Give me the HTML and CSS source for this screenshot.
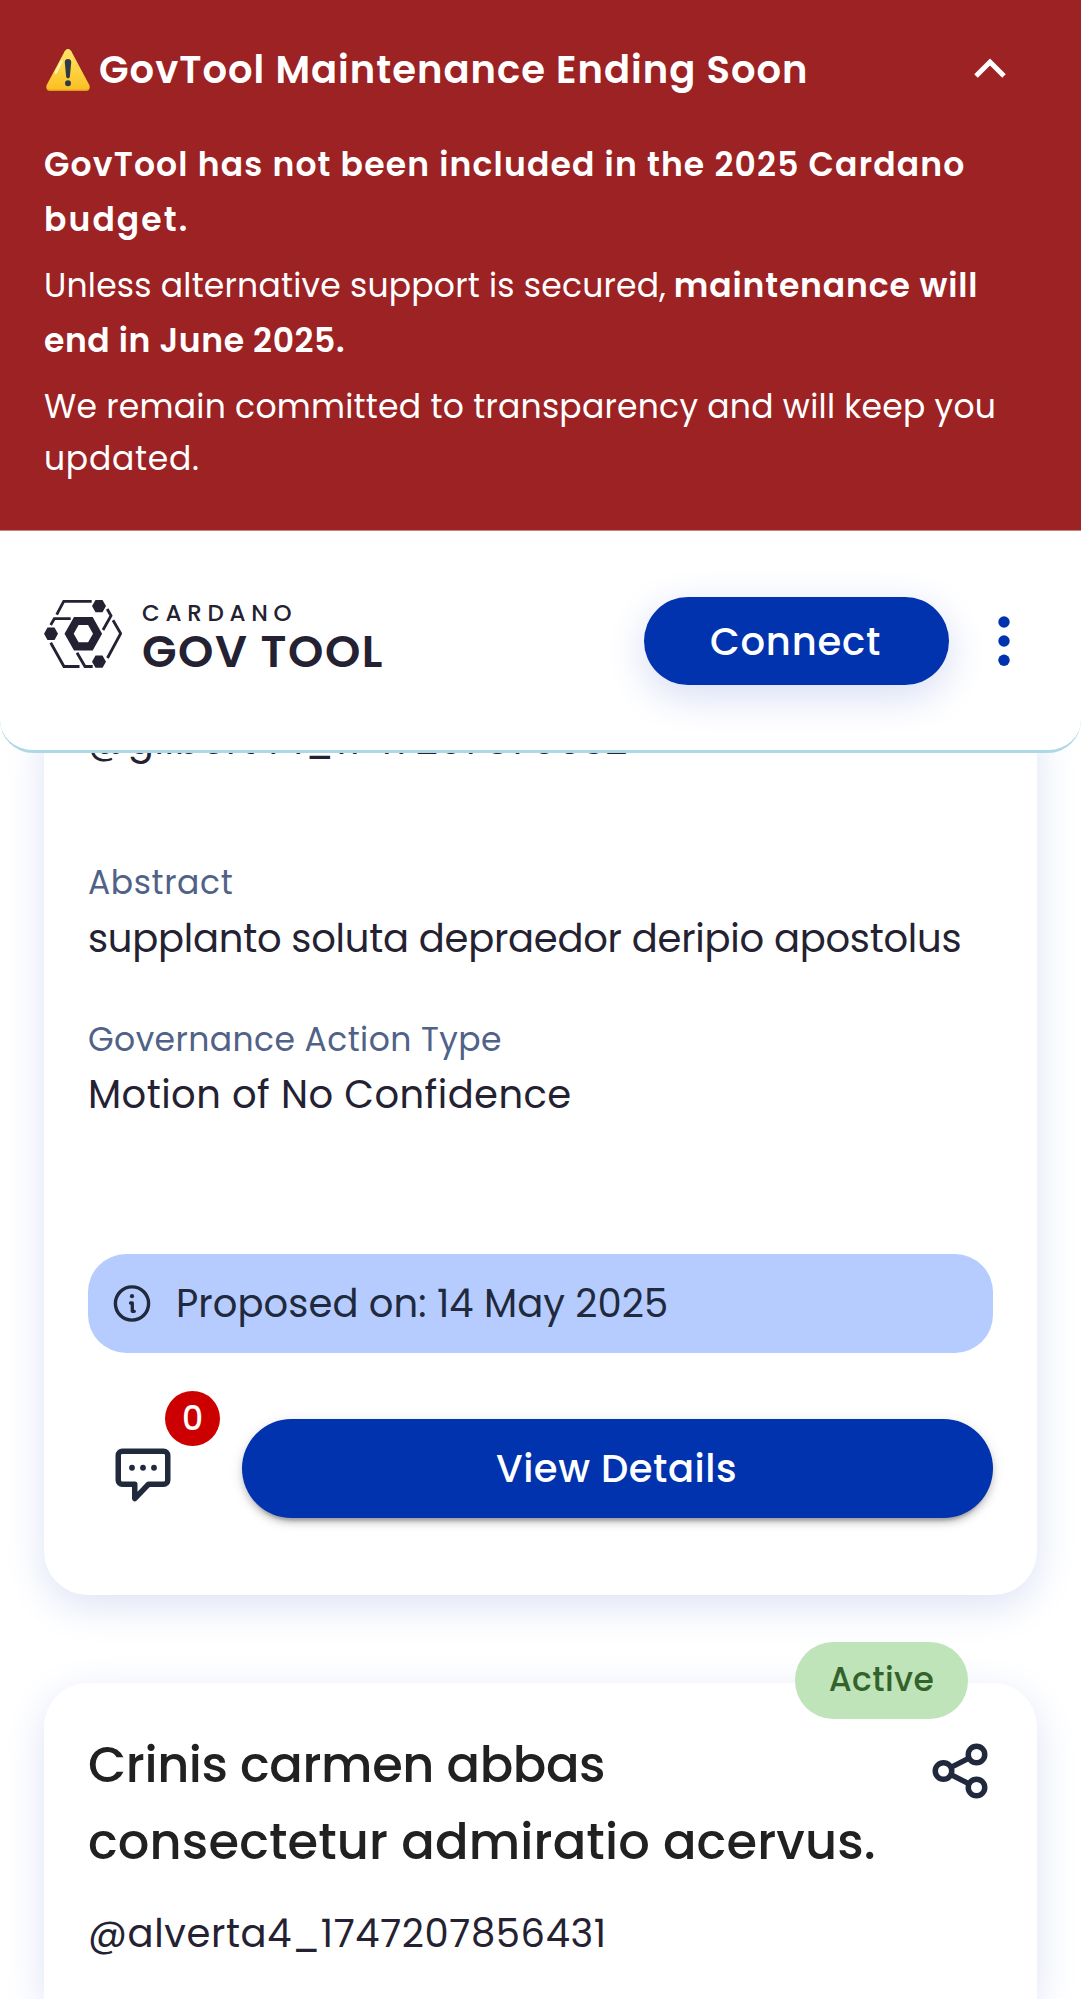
FILE: index.html
```html
<!DOCTYPE html>
<html lang="en">
<head>
<meta charset="utf-8">
<title>Cardano GovTool</title>
<link rel="stylesheet" href="styles.css">
</head>
<body>
<section class="banner">
  <div class="banner-head">
    <svg class="warning" viewBox="0 0 44 42" aria-hidden="true">
      <defs><linearGradient id="amber" x1="0" y1="0" x2="0" y2="1"><stop offset="0" stop-color="#ffe36c"/><stop offset=".6" stop-color="#fdd03c"/><stop offset="1" stop-color="#fbbf24"/></linearGradient></defs>
      <path d="M18.800 2.200Q22-2 25.200 2.200L43.300 37.200Q44.500 41.500 40.500 42H3.500Q-.5 41.500.7 37.200Z" fill="#e19c22"/>
      <path d="M18.800 2.200Q22-2 25.200 2.200L43.300 36Q44.500 40 40.500 40.500H3.500Q-.5 40 .7 36Z" fill="url(#amber)"/>
      <path d="M15.500 12.500 9.800 23.500" stroke="#fff3b0" stroke-width="2.600" stroke-linecap="round"/>
      <path d="M22 10c-2.400 0-3.300 1.400-3.200 3.400l1.300 13.800c.3 2.700 3.500 2.700 3.800 0L25.200 13.400c.1-2-.8-3.400-3.200-3.400z" fill="#2f3a45"/>
      <circle cx="22" cy="34.300" r="3" fill="#2f3a45"/>
    </svg>
    <h2 class="banner-title">GovTool Maintenance Ending Soon</h2>
    <svg class="chevron" viewBox="0 0 32 20" aria-hidden="true"><path d="M2 18 16 4 30 18" fill="none" stroke="#fff" stroke-width="5"/></svg>
  </div>
  <p class="notice"><b class="semi wide">GovTool has not been included in the 2025 Cardano</b><br><b class="semi widest">budget.</b></p>
  <p class="notice"><span class="lead">Unless alternative support is secured,</span> <b class="semi strong">maintenance will</b><br><b class="semi closing">end in June 2025.</b></p>
  <p class="notice light">We remain committed to transparency and will keep you<br><span class="tail">updated.</span></p>
</section>

<header class="header">
  <a class="logo">
    <svg class="mark" viewBox="0 0 78 68" aria-hidden="true">
      <g fill="none" stroke="#242232" stroke-width="2.800">
        <path d="M12.700 14.700 19.700 1.400H47.700M63.200 9 67 15.700 59 30M69 20.300 76.700 33.500 63.500 58M6.700 25 10.300 18.700H26.700M6.700 42.700 20 66.500H35.500M33 52.700 41 66.500H48.700"/>
      </g>
      <g fill="#242232">
        <path d="M48 6 51.500 0h7L62 6l-3.500 6.300h-7zM48 61.700l3.500-6.200h7l3.500 6.200-3.500 6.100h-7zM0 33.700l3.500-6.200h7l3.500 6.200-3.500 6.200h-7z"/>
        <path fill-rule="evenodd" d="M20.500 33.700 30 16.900h18.700l9.400 16.800-9.400 16.800H30zM29.700 33.700l4.900 8.600h9.500l4.900-8.600-4.900-8.600h-9.500z"/>
      </g>
    </svg>
    <span class="wordmark"><span class="brand">CARDANO</span><span class="product">GOV TOOL</span></span>
  </a>
  <button class="connect">Connect</button>
  <svg class="dots" viewBox="0 0 12 50" fill="#0033ad" aria-hidden="true"><circle cx="6" cy="6" r="5.700"/><circle cx="6" cy="25" r="5.700"/><circle cx="6" cy="44.200" r="5.700"/></svg>
</header>

<main class="list">
  <article class="card first">
    <p class="value author">@gilbert44_1747207870632</p>
    <p class="label abstract">Abstract</p>
    <p class="value summary">supplanto soluta depraedor deripio apostolus</p>
    <p class="label type">Governance Action Type</p>
    <p class="value kind">Motion of No Confidence</p>
    <div class="proposed">
      <svg class="info" viewBox="0 0 44 44" fill="none" stroke="#212a3d" aria-hidden="true"><circle cx="22" cy="21.500" r="16.600" stroke-width="3.400"/><path d="M20.500 21H22.300V29.300H24.300" stroke-width="3.300" stroke-linecap="round" stroke-linejoin="round"/><circle cx="22" cy="14.200" r="2.100" fill="#212a3d" stroke="none"/></svg>
      <span>Proposed on: 14 May 2025</span>
    </div>
    <div class="actions">
      <div class="comments">
        <svg class="bubble" viewBox="0 0 24 24" aria-hidden="true"><path d="M4.500 3h15A1.500 1.500 0 0 1 21 4.500v9a1.500 1.500 0 0 1-1.500 1.500H14l-5 5.200V15H4.500A1.500 1.500 0 0 1 3 13.500v-9A1.500 1.500 0 0 1 4.500 3z" fill="none" stroke="#212a3d" stroke-width="2" stroke-linejoin="round"/><g fill="#212a3d"><circle cx="8" cy="9" r="1.050"/><circle cx="12" cy="9" r="1.050"/><circle cx="16" cy="9" r="1.050"/></g></svg>
        <span class="count">0</span>
      </div>
      <button class="details">View Details</button>
    </div>
  </article>

  <article class="card second">
    <span class="status">Active</span>
    <div class="card-head">
      <h3 class="title"><span class="title-a">Crinis carmen abbas</span><br>consectetur admiratio acervus.</h3>
      <svg class="share" viewBox="0 0 24 24" fill="none" stroke="#212a3d" stroke-width="2" aria-hidden="true"><circle cx="18" cy="6" r="3"/><circle cx="6" cy="12" r="3"/><circle cx="18" cy="18" r="3"/><path d="M8.700 10.700 15.300 7.300M8.700 13.300l6.600 3.400"/></svg>
    </div>
    <p class="value proposer">@alverta4_1747207856431</p>
  </article>
</main>
</body>
</html>
```
FILE: styles.css
```css
* { box-sizing: border-box; }

body {
  margin: 0;
  height: 1999px;
  overflow: hidden;
  background: #fff;
  color: #242232;
  font-family: Poppins, Inter, "Open Sans", sans-serif;
}

h2, h3, p { margin: 0; white-space: nowrap; }
svg { display: block; flex: none; }
button { border: 0; padding: 0; color: #fff; background: #0033ad; font-family: inherit; font-weight: 500; font-size: 38.5px; }

/* Maintenance banner */
.banner {
  height: 531px;
  padding: 40px 44px 0;
  background: #9c2224;
  border-bottom: 1px solid #c98486;
  color: #fff;
}
.banner-head { display: flex; align-items: center; height: 58px; margin-bottom: 39px; padding-right: 31px; }
.warning { width: 44px; height: 42px; margin: 2px 9px 0 2px; }
.banner-title { flex: 1; font-size: 38.5px; line-height: 60px; padding-top: 2px; font-weight: 600; letter-spacing: 1px; }
.chevron { width: 32px; height: 20px; margin-bottom: 2px; }
.notice { font-size: 33px; line-height: 55px; margin-bottom: 11px; }
.notice.light { line-height: 52px; margin-top: 13px; letter-spacing: .25px; }
.semi { font-weight: 600; }
.wide { letter-spacing: 1.17px; }
.widest { letter-spacing: 2.1px; }
.lead { letter-spacing: .22px; margin-right: -1px; }
.strong { letter-spacing: .87px; }
.closing { letter-spacing: .6px; }
.tail { letter-spacing: .75px; }

/* App bar */
.header {
  position: relative;
  z-index: 1;
  display: flex;
  align-items: flex-start;
  height: 222px;
  padding: 65px 71px 0 44px;
  background: #fff;
  border-bottom: 3px solid #add8e6;
  border-radius: 0 0 33px 33px;
}
.logo { display: flex; gap: 20px; margin-right: auto; }
.mark { width: 78px; height: 68px; margin-top: 4px; }
.wordmark { display: flex; flex-direction: column; gap: 5px; padding-top: 5px; white-space: nowrap; }
.brand { font-size: 23px; line-height: 24px; font-weight: 500; letter-spacing: 5.7px; }
.product { font-size: 45px; line-height: 44px; font-weight: 600; letter-spacing: 1.5px; }
.connect { width: 305px; height: 88px; margin-top: 1px; border-radius: 45px; letter-spacing: .81px; line-height: 89px; padding-right: 2px; box-shadow: 0 11px 41px #d6dcf4; }
.dots { width: 12px; height: 50px; margin: 20px 0 0 49px; }

/* Governance action cards */
.list { display: flex; flex-direction: column; gap: 88px; height: 1299px; overflow: hidden; margin-top: -53px; padding: 0 44px; }
.card { position: relative; flex: none; background: #fff; border-radius: 44px; box-shadow: 0 11px 41px #dde3f5; }
.first { height: 895px; padding: 12px 44px 0; }
.second { height: 316px; padding: 43px 44px 0; border-radius: 44px 44px 0 0; }
.value { font-size: 38.5px; line-height: 58px; }
.label { font-size: 33px; line-height: 44px; color: #506288; }
.author { letter-spacing: .69px; margin-bottom: 91px; }
.abstract { letter-spacing: .6px; margin-bottom: 5px; }
.summary { letter-spacing: -.25px; margin-bottom: 50px; }
.type { letter-spacing: .42px; margin-bottom: 4px; }
.kind { letter-spacing: .45px; margin-bottom: 130px; }
.proposed { display: flex; align-items: center; gap: 22px; height: 99px; padding-left: 22px; border-radius: 38px; background: #b6ccff; color: #212a3d; font-size: 38.5px; letter-spacing: .07px; }
.info { width: 44px; height: 44px; }
.actions { display: flex; gap: 44px; margin-top: 66px; }
.comments { position: relative; width: 110px; padding: 24px 22px 0; }
.bubble { width: 66px; height: 66px; }
.count { position: absolute; left: 77px; top: -28px; width: 55px; height: 55px; border-radius: 50%; background: #c00; color: #fff; font-size: 33px; line-height: 55px; font-weight: 500; text-align: center; }
.details { flex: 1; height: 99px; border-radius: 50px; letter-spacing: .53px; padding-right: 2px; box-shadow: 0 8px 3px -5px rgba(0, 0, 0, .2), 0 5px 6px rgba(0, 0, 0, .14), 0 3px 14px rgba(0, 0, 0, .12); }
.status { position: absolute; right: 69px; top: -41px; width: 173px; height: 77px; border-radius: 38px; background: #c0e4ba; color: #33632b; font-size: 33px; line-height: 76px; font-weight: 500; letter-spacing: .4px; text-align: center; }
.card-head { display: flex; justify-content: space-between; height: 179px; }
.title { color: #212121; font-size: 49.5px; line-height: 77px; font-weight: 500; letter-spacing: .15px; }
.title-a { letter-spacing: -.4px; }
.share { width: 66px; height: 66px; margin-top: 12px; }
.proposer { letter-spacing: .6px; }
```
